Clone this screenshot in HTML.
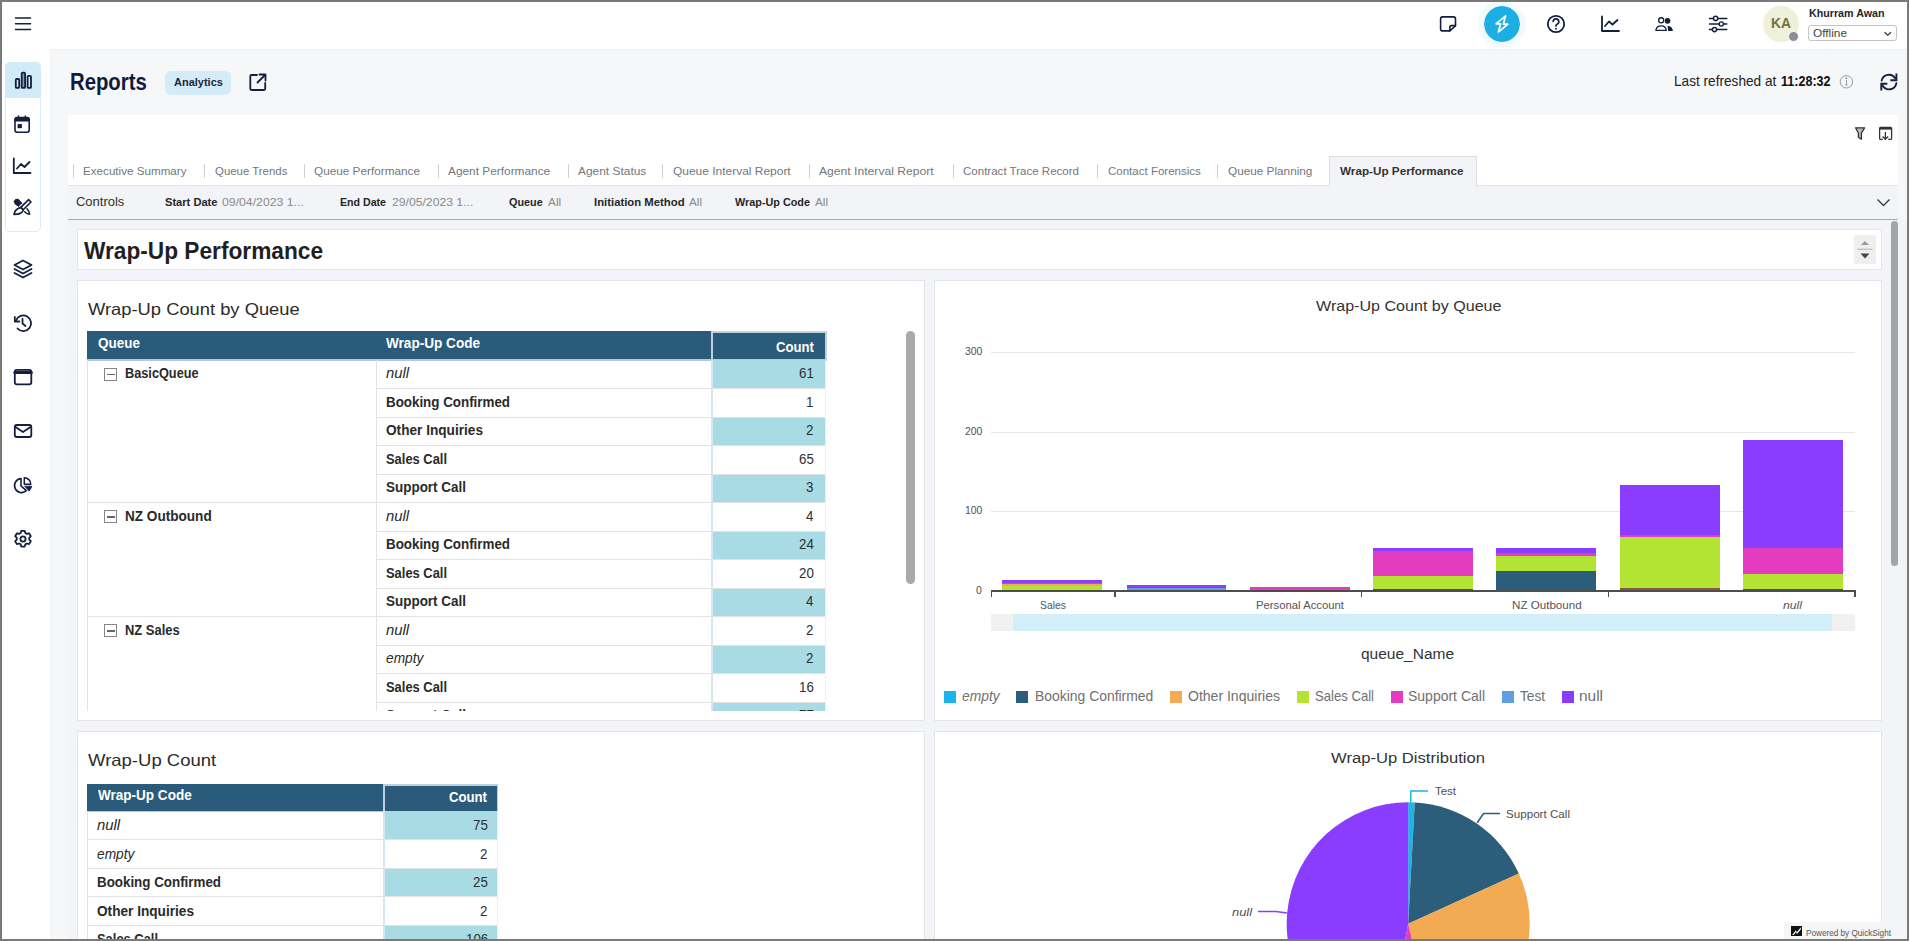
<!DOCTYPE html>
<html><head><meta charset="utf-8"><title>Reports - Wrap-Up Performance</title>
<style>
html,body{margin:0;padding:0;}
body{width:1909px;height:941px;position:relative;overflow:hidden;background:#f6f7f9;font-family:'Liberation Sans',sans-serif;}
.a{position:absolute;box-sizing:border-box;}
.t{position:absolute;white-space:nowrap;transform-origin:0 0;}
svg{position:absolute;overflow:visible;}
</style></head><body>
<!-- header -->
<div class=a style="left:0;top:0;width:1909px;height:49px;background:#fff;"></div>
<div class=a style="left:50px;top:49px;width:1857px;height:1px;background:#ecedf0;"></div>
<div class=a style="left:50px;top:49px;width:1px;height:892px;background:#f1f2f4;"></div>
<!-- sidebar -->
<div class=a style="left:0;top:49px;width:50px;height:892px;background:#fff;"></div>
<div class=a style="left:5px;top:62px;width:36px;height:170px;border:1px solid #d9ecf6;border-radius:5px;background:#fff;"></div>
<div class=a style="left:5px;top:62px;width:36px;height:36px;background:#d1ebf8;border-radius:5px 5px 0 0;"></div>

<svg width="1909" height="941" style="left:0;top:0;" fill="none" stroke="#141f3f" stroke-width="1.8" stroke-linecap="round" stroke-linejoin="round">
 <!-- hamburger -->
 <path d="M15.5 18H30.5M15.5 23.7H30.5M15.5 29.5H30.5" stroke-width="1.6"/>
 <!-- bars active -->
 <rect x="15.8" y="79" width="3.4" height="8.9" rx="1"/>
 <rect x="21.7" y="72.6" width="3.4" height="15.3" rx="1" fill="#8797ad"/>
 <rect x="27.6" y="75.8" width="3.4" height="12.1" rx="1"/>
 <!-- calendar -->
 <path d="M15 119.8A2.2 2.2 0 0 1 17.2 117.6H27A2.2 2.2 0 0 1 29.2 119.8V130.1A2.2 2.2 0 0 1 27 132.3H17.2A2.2 2.2 0 0 1 15 130.1Z" stroke-width="1.6"/>
 <path d="M14.3 121.6V119.6A2.4 2.4 0 0 1 16.7 117.2H27.5A2.4 2.4 0 0 1 29.9 119.6V121.6Z" fill="#141f3f" stroke="none"/>
 <path d="M18.5 115.6V118M25.4 115.6V118" stroke-width="1.5" stroke-linecap="butt"/>
 <rect x="17.6" y="124.1" width="4.3" height="4.1" fill="#141f3f" stroke="none"/>
 <!-- line chart -->
 <path d="M13.8 158.5V173H30.5"/>
 <path d="M17 168.5L21 164L24.5 167L29.5 162"/>
 <!-- brush -->
 <path d="M28.6 199.6L31 202L23.2 209.8L20.8 207.4Z" stroke-width="1.6"/>
 <path d="M20.8 207.4L23.2 209.8Q22.5 214.3 14 214.3Q15 209 20.8 207.4Z" stroke-width="1.7"/>
 <path d="M14.3 201.3Q15 198.5 18.2 199.2L22 203.4L19.6 204.6L18.8 206.4Q14 204.5 14.3 201.3Z" fill="#141f3f" stroke-width="1"/>
 <path d="M27 208.8Q29.8 212 29.6 214.2Q27 214.2 24.6 211.8" stroke-width="1.6"/>
 <!-- layers -->
 <path d="M23 260.5L31.5 265L23 269.5L14.5 265Z"/>
 <path d="M14.5 269L23 273.5L31.5 269M14.5 273L23 277.5L31.5 273"/>
 <!-- history -->
 <path d="M16 320.5A7.8 7.8 0 1 1 17.5 328.5"/>
 <path d="M14.8 317V321.5H19.3"/>
 <path d="M22.5 319V323.5L25.5 326"/>
 <!-- window -->
 <rect x="14.8" y="369.8" width="16.5" height="14.5" rx="2"/>
 <path d="M14.8 372.5H31.3" stroke-width="3"/>
 <!-- mail -->
 <rect x="14.8" y="425" width="16.5" height="12" rx="2"/>
 <path d="M15.5 427L23 432L30.5 427"/>
 <!-- pie -->
 <path d="M21 478.6A7 7 0 1 0 26.3 490.7L21 485.8Z" stroke-width="1.6"/>
 <path d="M24.3 477.7V484.2H30.8A6.6 6.6 0 0 0 24.3 477.7Z" stroke-width="1.5"/>
 <path d="M25 486.2H31.8Q31 489 29.2 490.9Z" fill="#141f3f" stroke-width="0.8"/>
 <!-- gear -->
 <circle cx="23" cy="539" r="2.6"/>
 <path d="M21.3 530.8h3.4l.6 2.2 1.6.9 2.2-.6 1.7 2.9-1.6 1.6v1.8l1.6 1.6-1.7 2.9-2.2-.6-1.6.9-.6 2.2h-3.4l-.6-2.2-1.6-.9-2.2.6-1.7-2.9 1.6-1.6v-1.8l-1.6-1.6 1.7-2.9 2.2.6 1.6-.9z"/>

 <!-- header icons -->
 <path d="M1442.6 16.9H1453.5A2 2 0 0 1 1455.5 18.9V25.8L1449.8 30.9H1442.6A2 2 0 0 1 1440.6 28.9V18.9A2 2 0 0 1 1442.6 16.9Z" stroke-width="1.6"/>
 <path d="M1455.4 25.6H1451.4A1.6 1.6 0 0 0 1449.8 27.2V30.9" stroke-width="1.6"/>
 <circle cx="1502" cy="24" r="18" fill="#1caee4" stroke="none"/>
 <circle cx="1502" cy="24" r="21" fill="none" stroke="#f3fafd" stroke-width="6"/>
 <path d="M1505.6 15.8L1496 23.8H1500.6L1498.4 32L1507.9 24.2H1503.3Z" stroke="#fff" stroke-width="1.7"/>
 <circle cx="1556" cy="24" r="8.2"/>
 <path d="M1553.2 21.5A2.8 2.8 0 1 1 1557 24.2Q1556 24.8 1556 26" stroke-width="1.7"/>
 <circle cx="1556" cy="28.8" r="1" fill="#141f3f" stroke="none"/>
 <path d="M1602 16.5V31H1619"/>
 <path d="M1605 26L1609 21.5L1612.5 24.5L1617.5 20"/>
 <circle cx="1667.5" cy="20.8" r="2.9" fill="#141f3f" stroke="none"/>
 <circle cx="1661.2" cy="20.3" r="3.7" fill="#fff" stroke="none"/>
 <circle cx="1661.2" cy="20.3" r="2.55" stroke-width="1.3"/>
 <path d="M1655.9 30.4Q1656.4 25.9 1661.1 25.9Q1665.8 25.9 1666.3 30.4Z" stroke-width="1.3"/>
 <path d="M1667.6 25.8Q1672.4 26.2 1672.9 30.9H1668.1Z" fill="#141f3f" stroke="none"/>
 <path d="M1709.5 18.4H1726.8M1709.5 24H1726.8M1709.5 29.6H1726.8" stroke-width="1.5"/>
 <circle cx="1715.6" cy="18.4" r="2.1" fill="#fff" stroke-width="1.4"/>
 <circle cx="1721.3" cy="24" r="2.1" fill="#fff" stroke-width="1.4"/>
 <circle cx="1714.5" cy="29.6" r="2.1" fill="#fff" stroke-width="1.4"/>
 <!-- external link -->
 <path d="M257 75H251.5A1.2 1.2 0 0 0 250.3 76.2V88.8A1.2 1.2 0 0 0 251.5 90H264A1.2 1.2 0 0 0 265.2 88.8V83"/>
 <path d="M257.5 82.5L265 75M259.5 74.5H265.5V80.5"/>
 <!-- refresh -->
 <path d="M1881.7 80.6A7.4 7.4 0 0 1 1895.2 78.2M1896.3 83.3A7.4 7.4 0 0 1 1882.7 85.8" stroke-width="1.9"/>
 <path d="M1896.4 73.6V80.3H1890.4M1881.3 90.4V83.8H1887.3" stroke-width="1.9" stroke-linecap="butt" stroke-linejoin="miter"/>
</svg>
<!-- avatar -->
<div class=a style="left:1763px;top:6px;width:36px;height:36px;border-radius:50%;background:#eef0da;"></div>
<div class=a style="left:1788px;top:31px;width:11px;height:11px;border-radius:50%;background:#8a8e96;border:1px solid #fff;"></div>
<div class=a style="left:1808px;top:25px;width:89px;height:16px;border:1px solid #c4c4c4;border-radius:3px;background:#fff;"></div>
<svg width="1909" height="941" style="left:0;top:0;" fill="none" stroke="#333" stroke-width="1.2">
 <path d="M1884.5 32.3L1887.8 35.3L1891 32.3"/>
</svg>
<!-- Analytics pill -->
<div class=a style="left:165px;top:71px;width:66px;height:24px;border-radius:6px;background:#d4ecf8;"></div>
<!-- info circle -->
<svg width="1909" height="941" style="left:0;top:0;" fill="none" stroke="#9a9a9a" stroke-width="1">
 <circle cx="1846.4" cy="81.8" r="6.2"/>
 <path d="M1846.4 80V85M1845.2 85H1847.6" />
 <circle cx="1846.4" cy="78.2" r="0.6" fill="#9a9a9a"/>
</svg>

<!-- dashboard container -->
<div class=a style="left:68px;top:115px;width:1830px;height:71px;background:#fff;border-bottom:1px solid #e4e5e9;"></div>
<div class=a style="left:68px;top:186px;width:1830px;height:34px;background:#f3f4f8;border-bottom:1px solid #a6aab1;"></div>
<div class=a style="left:68px;top:220px;width:1839px;height:721px;background:#f3f4f7;"></div>
<!-- active tab -->
<div class=a style="left:1329px;top:156px;width:148px;height:31px;background:#f3f4f8;border:1px solid #dcdde1;border-bottom:none;"></div>
<!-- tab separators -->
<div class=a style="left:73px;top:164px;width:1px;height:14px;background:#d0d0d0;"></div>
<div class=a style="left:204px;top:164px;width:1px;height:14px;background:#d0d0d0;"></div>
<div class=a style="left:304px;top:164px;width:1px;height:14px;background:#d0d0d0;"></div>
<div class=a style="left:438px;top:164px;width:1px;height:14px;background:#d0d0d0;"></div>
<div class=a style="left:568px;top:164px;width:1px;height:14px;background:#d0d0d0;"></div>
<div class=a style="left:662px;top:164px;width:1px;height:14px;background:#d0d0d0;"></div>
<div class=a style="left:809px;top:164px;width:1px;height:14px;background:#d0d0d0;"></div>
<div class=a style="left:953px;top:164px;width:1px;height:14px;background:#d0d0d0;"></div>
<div class=a style="left:1097px;top:164px;width:1px;height:14px;background:#d0d0d0;"></div>
<div class=a style="left:1217px;top:164px;width:1px;height:14px;background:#d0d0d0;"></div>
<svg width="1909" height="941" style="left:0;top:0;" fill="none" stroke="#333" stroke-width="1.3" stroke-linejoin="round">
 <!-- filter -->
 <path d="M1855.6 127.8H1864.6L1861.4 133.2V139.2L1858.4 137.2V133.2Z" fill="#bbb"/>
 <!-- download -->
 <path d="M1882.7 139.4H1880.6A1 1 0 0 1 1879.6 138.4V128.4A1 1 0 0 1 1880.6 127.4H1890.6A1 1 0 0 1 1891.6 128.4V138.4A1 1 0 0 1 1890.6 139.4H1888.3"/>
 <path d="M1879.8 128.6H1891.4" stroke-width="2"/>
 <path d="M1885.4 132V139.2M1882.6 136.5L1885.4 139.3L1888.2 136.5"/>
 <!-- chevron -->
 <path d="M1877.5 199.5L1883.5 205.5L1889.5 199.5" stroke-width="1.2"/>
</svg>

<!-- title panel -->
<div class=a style="left:77px;top:229px;width:1805px;height:41px;background:#fff;border:1px solid #e4e5e9;"></div>
<div class=a style="left:1854px;top:235px;width:22px;height:29px;background:#efefef;border-radius:2px;"></div>
<svg width="1909" height="941" style="left:0;top:0;" stroke="none">
 <path d="M1861 245H1869L1865 241Z" fill="#9a9a9a"/>
 <path d="M1857.5 249.2H1872.5" stroke="#b0b0b0" stroke-width="1"/>
 <path d="M1860.5 253.5H1869.5L1865 258.5Z" fill="#444"/>
</svg>
<!-- panels -->
<div class=a style="left:77px;top:280px;width:848px;height:441px;background:#fff;border:1px solid #e4e5e9;"></div>
<div class=a style="left:934px;top:280px;width:948px;height:441px;background:#fff;border:1px solid #e4e5e9;"></div>
<div class=a style="left:77px;top:731px;width:848px;height:220px;background:#fff;border:1px solid #e4e5e9;"></div>
<div class=a style="left:934px;top:731px;width:948px;height:220px;background:#fff;border:1px solid #e4e5e9;"></div>
<!-- dashboard scrollbar thumb -->
<div class=a style="left:1891px;top:221px;width:7px;height:345px;background:#a4a5a8;border-radius:4px;"></div>

<div class=a style="left:87px;top:331px;width:624px;height:28px;background:#2b5b7a;"></div>
<div class=a style="left:711px;top:331px;width:116px;height:29px;background:#bcd3de;"></div>
<div class=a style="left:713px;top:333px;width:112px;height:26px;background:#2b5b7a;"></div>
<div class=a style="left:87px;top:359px;width:740px;height:1.5px;background:#b3cad8;"></div>
<div class=a style="left:87px;top:360px;width:740px;height:351px;overflow:hidden;">
<div class=a style="left:0px;top:0px;width:1px;height:400px;background:#e2e2e2;"></div>
<div class=a style="left:289px;top:0px;width:1px;height:400px;background:#e2e2e2;"></div>
<div class=a style="left:624px;top:0px;width:2px;height:400px;background:#d5e6ee;"></div>
<div class=a style="left:738px;top:0px;width:1px;height:400px;background:#eef0f1;"></div>
<div class=a style="left:626px;top:0.0px;width:112px;height:28px;background:#a9dbe4;"></div>
<div class=a style="left:289px;top:28.0px;width:449px;height:1px;background:#e2e2e2;"></div>
<div class=a style="left:626px;top:57.0px;width:112px;height:28px;background:#a9dbe4;"></div>
<div class=a style="left:289px;top:56.5px;width:449px;height:1px;background:#e2e2e2;"></div>
<div class=a style="left:289px;top:85.0px;width:449px;height:1px;background:#e2e2e2;"></div>
<div class=a style="left:626px;top:114.0px;width:112px;height:28px;background:#a9dbe4;"></div>
<div class=a style="left:289px;top:113.5px;width:449px;height:1px;background:#e2e2e2;"></div>
<div class=a style="left:289px;top:142.0px;width:449px;height:1px;background:#e2e2e2;"></div>
<div class=a style="left:626px;top:171.0px;width:112px;height:28px;background:#a9dbe4;"></div>
<div class=a style="left:289px;top:170.5px;width:449px;height:1px;background:#e2e2e2;"></div>
<div class=a style="left:289px;top:199.0px;width:449px;height:1px;background:#e2e2e2;"></div>
<div class=a style="left:626px;top:228.0px;width:112px;height:28px;background:#a9dbe4;"></div>
<div class=a style="left:289px;top:227.5px;width:449px;height:1px;background:#e2e2e2;"></div>
<div class=a style="left:289px;top:256.0px;width:449px;height:1px;background:#e2e2e2;"></div>
<div class=a style="left:626px;top:285.0px;width:112px;height:28px;background:#a9dbe4;"></div>
<div class=a style="left:289px;top:284.5px;width:449px;height:1px;background:#e2e2e2;"></div>
<div class=a style="left:289px;top:313.0px;width:449px;height:1px;background:#e2e2e2;"></div>
<div class=a style="left:626px;top:342.0px;width:112px;height:28px;background:#a9dbe4;"></div>
<div class=a style="left:289px;top:341.5px;width:449px;height:1px;background:#e2e2e2;"></div>
<div class=a style="left:289px;top:370.0px;width:449px;height:1px;background:#e2e2e2;"></div>
<div class=a style="left:0px;top:142.0px;width:289px;height:1px;background:#e2e2e2;"></div>
<div class=a style="left:0px;top:256.0px;width:289px;height:1px;background:#e2e2e2;"></div>
</div>
<div class=a style="left:104px;top:367.5px;width:13px;height:13px;border:1px solid #858585;background:#fff;"></div>
<div class=a style="left:106.5px;top:373.5px;width:8px;height:1.6px;background:#666;"></div>
<div class=a style="left:104px;top:510.0px;width:13px;height:13px;border:1px solid #858585;background:#fff;"></div>
<div class=a style="left:106.5px;top:516.0px;width:8px;height:1.6px;background:#666;"></div>
<div class=a style="left:104px;top:624.0px;width:13px;height:13px;border:1px solid #858585;background:#fff;"></div>
<div class=a style="left:106.5px;top:630.0px;width:8px;height:1.6px;background:#666;"></div>
<div class=a style="left:906px;top:331px;width:9px;height:253px;background:#aaaaaa;border-radius:5px;"></div>
<div class=a style="left:87px;top:783.5px;width:296px;height:27px;background:#2b5b7a;"></div>
<div class=a style="left:383px;top:783.5px;width:115px;height:28px;background:#bcd3de;"></div>
<div class=a style="left:385px;top:785.5px;width:112px;height:25px;background:#2b5b7a;"></div>
<div class=a style="left:87px;top:810.5px;width:411px;height:1.5px;background:#b3cad8;"></div>
<div class=a style="left:87px;top:811px;width:412px;height:128px;overflow:hidden;">
<div class=a style="left:0px;top:0px;width:1px;height:200px;background:#e2e2e2;"></div>
<div class=a style="left:296px;top:0px;width:2px;height:200px;background:#d5e6ee;"></div>
<div class=a style="left:410px;top:0px;width:1px;height:200px;background:#eef0f1;"></div>
<div class=a style="left:298px;top:0.0px;width:112px;height:28px;background:#a9dbe4;"></div>
<div class=a style="left:0px;top:28.0px;width:410px;height:1px;background:#e2e2e2;"></div>
<div class=a style="left:298px;top:57.0px;width:112px;height:28px;background:#a9dbe4;"></div>
<div class=a style="left:0px;top:56.5px;width:410px;height:1px;background:#e2e2e2;"></div>
<div class=a style="left:0px;top:85.0px;width:410px;height:1px;background:#e2e2e2;"></div>
<div class=a style="left:298px;top:114.0px;width:112px;height:28px;background:#a9dbe4;"></div>
<div class=a style="left:0px;top:113.5px;width:410px;height:1px;background:#e2e2e2;"></div>
<div class=a style="left:0px;top:142.0px;width:410px;height:1px;background:#e2e2e2;"></div>
</div>
<div class=a style="left:991px;top:352.2px;width:864px;height:1px;background:#e6e6e6;"></div>
<div class=a style="left:991px;top:431.7px;width:864px;height:1px;background:#e6e6e6;"></div>
<div class=a style="left:991px;top:511.1px;width:864px;height:1px;background:#e6e6e6;"></div>
<div class=a style="left:1002.2px;top:590px;width:99.5px;height:1px;background:#2c5d7b;"></div>
<div class=a style="left:1002.2px;top:585.5px;width:99.5px;height:4.5px;background:#b3e434;"></div>
<div class=a style="left:1002.2px;top:584px;width:99.5px;height:1.5px;background:#f2aa53;"></div>
<div class=a style="left:1002.2px;top:583px;width:99.5px;height:1px;background:#e33cc0;"></div>
<div class=a style="left:1002.2px;top:580.1px;width:99.5px;height:2.9px;background:#8a3dff;"></div>
<div class=a style="left:1126.5px;top:588px;width:99.5px;height:3px;background:#5f9ee3;"></div>
<div class=a style="left:1126.5px;top:584.8px;width:99.5px;height:3.2px;background:#8a3dff;"></div>
<div class=a style="left:1250.0px;top:587.4px;width:99.5px;height:3.6px;background:#e33cc0;"></div>
<div class=a style="left:1373.0px;top:589px;width:99.5px;height:2px;background:#2c5d7b;"></div>
<div class=a style="left:1373.0px;top:575.6px;width:99.5px;height:13.4px;background:#b3e434;"></div>
<div class=a style="left:1373.0px;top:550.7px;width:99.5px;height:24.9px;background:#e33cc0;"></div>
<div class=a style="left:1373.0px;top:547.5px;width:99.5px;height:3.2px;background:#8a3dff;"></div>
<div class=a style="left:1496.0px;top:571.4px;width:99.5px;height:19.6px;background:#2c5d7b;"></div>
<div class=a style="left:1496.0px;top:555.5px;width:99.5px;height:15.9px;background:#b3e434;"></div>
<div class=a style="left:1496.0px;top:552.5px;width:99.5px;height:3.0px;background:#e33cc0;"></div>
<div class=a style="left:1496.0px;top:548px;width:99.5px;height:4.5px;background:#8a3dff;"></div>
<div class=a style="left:1620.0px;top:588.3px;width:99.5px;height:2.7px;background:#8a5a3c;"></div>
<div class=a style="left:1620.0px;top:537.3px;width:99.5px;height:51.0px;background:#b3e434;"></div>
<div class=a style="left:1620.0px;top:534.8px;width:99.5px;height:2.5px;background:#e33cc0;"></div>
<div class=a style="left:1620.0px;top:485.3px;width:99.5px;height:49.5px;background:#8a3dff;"></div>
<div class=a style="left:1743.0px;top:589px;width:99.5px;height:2px;background:#2c5d7b;"></div>
<div class=a style="left:1743.0px;top:573.7px;width:99.5px;height:15.3px;background:#b3e434;"></div>
<div class=a style="left:1743.0px;top:548.1px;width:99.5px;height:25.6px;background:#e33cc0;"></div>
<div class=a style="left:1743.0px;top:439.8px;width:99.5px;height:108.3px;background:#8a3dff;"></div>
<div class=a style="left:990.5px;top:590px;width:865px;height:1.6px;background:#4d4d4d;"></div>
<div class=a style="left:990.5px;top:590px;width:1.6px;height:7px;background:#4d4d4d;"></div>
<div class=a style="left:1114px;top:590px;width:1.6px;height:7px;background:#4d4d4d;"></div>
<div class=a style="left:1360.5px;top:590px;width:1.6px;height:7px;background:#4d4d4d;"></div>
<div class=a style="left:1607.5px;top:590px;width:1.6px;height:7px;background:#4d4d4d;"></div>
<div class=a style="left:1854px;top:590px;width:1.6px;height:7px;background:#4d4d4d;"></div>
<div class=a style="left:991px;top:613.5px;width:864px;height:17px;background:#d2eef8;"></div>
<div class=a style="left:991px;top:613.5px;width:22px;height:17px;background:#f1f1f1;"></div>
<div class=a style="left:1832px;top:613.5px;width:23px;height:17px;background:#f1f1f1;"></div>
<div class=a style="left:944px;top:691px;width:12px;height:12px;background:#1db4e8;"></div>
<div class=a style="left:1016px;top:691px;width:12px;height:12px;background:#2c5d7b;"></div>
<div class=a style="left:1170px;top:691px;width:12px;height:12px;background:#f2aa53;"></div>
<div class=a style="left:1297px;top:691px;width:12px;height:12px;background:#b3e434;"></div>
<div class=a style="left:1391px;top:691px;width:12px;height:12px;background:#e33cc0;"></div>
<div class=a style="left:1502px;top:691px;width:12px;height:12px;background:#5f9ee3;"></div>
<div class=a style="left:1562px;top:691px;width:12px;height:12px;background:#8a3dff;"></div>

<!-- pie -->
<svg width="1909" height="941" style="left:0;top:0;" stroke="none">
 <path d="M1408.2 923.8L1408.20 802.30A121.5 121.5 0 0 1 1414.77 802.48Z" fill="#1db4e8"/>
<path d="M1408.2 923.8L1414.77 802.48A121.5 121.5 0 0 1 1518.85 873.61Z" fill="#2c5d7b"/>
<path d="M1408.2 923.8L1518.85 873.61A121.5 121.5 0 0 1 1435.53 1042.19Z" fill="#f2aa53"/>
<path d="M1408.2 923.8L1435.53 1042.19A121.5 121.5 0 0 1 1385.02 1043.07Z" fill="#e33cc0"/>
<path d="M1408.2 923.8L1385.02 1043.07A121.5 121.5 0 0 1 1408.20 802.30Z" fill="#8a3dff"/>
 <path d="M1410.8 802.5V791H1428" fill="none" stroke="#1db4e8" stroke-width="1.5"/>
 <path d="M1477.2 822.7L1483.5 813.6H1500" fill="none" stroke="#2c5d7b" stroke-width="1.5"/>
 <path d="M1258 911.5H1276L1287 913" fill="none" stroke="#8a3dff" stroke-width="1.5"/>
</svg>
<!-- quicksight logo -->
<div class=a style="left:1784px;top:922px;width:123px;height:19px;background:#f4f5f7;"></div>
<div class=a style="left:1791px;top:926px;width:11px;height:10px;background:#111;"></div>
<svg width="1909" height="941" style="left:0;top:0;" stroke="none">
 <path d="M1792.2 935L1795.8 930.2L1796.8 932.2L1800.8 927.3V929.5L1797 934L1796 932L1793.8 935Z" fill="#fff"/>
</svg>

<div class=t style="left:1808.5px;top:8px;font-size:11px;line-height:11px;font-weight:bold;font-style:normal;color:#262626;transform:scaleX(0.9724);">Khurram Awan</div>
<div class=t style="left:1812.9px;top:28px;font-size:11px;line-height:11px;font-weight:normal;font-style:normal;color:#444;transform:scaleX(1.0762);">Offline</div>
<div class=t style="left:1770.8px;top:16px;font-size:14.5px;line-height:14.5px;font-weight:bold;font-style:normal;color:#75733a;transform:scaleX(0.9545);">KA</div>
<div class=t style="left:69.7px;top:71px;font-size:23px;line-height:23px;font-weight:bold;font-style:normal;color:#0f1b3e;transform:scaleX(0.8826);">Reports</div>
<div class=t style="left:174.0px;top:77px;font-size:11px;line-height:11px;font-weight:bold;font-style:normal;color:#1d2540;">Analytics</div>
<div class=t style="left:1673.7px;top:74px;font-size:14.5px;line-height:14.5px;font-weight:normal;font-style:normal;color:#222;transform:scaleX(0.9400);">Last refreshed at</div>
<div class=t style="left:1780.6px;top:74px;font-size:14.5px;line-height:14.5px;font-weight:bold;font-style:normal;color:#111;transform:scaleX(0.8664);">11:28:32</div>
<div class=t style="left:83.2px;top:166px;font-size:11px;line-height:11px;font-weight:normal;font-style:normal;color:#74777d;transform:scaleX(1.0581);">Executive Summary</div>
<div class=t style="left:214.9px;top:166px;font-size:11px;line-height:11px;font-weight:normal;font-style:normal;color:#74777d;transform:scaleX(1.0385);">Queue Trends</div>
<div class=t style="left:314.0px;top:166px;font-size:11px;line-height:11px;font-weight:normal;font-style:normal;color:#74777d;transform:scaleX(1.0700);">Queue Performance</div>
<div class=t style="left:447.8px;top:166px;font-size:11px;line-height:11px;font-weight:normal;font-style:normal;color:#74777d;transform:scaleX(1.0783);">Agent Performance</div>
<div class=t style="left:578.0px;top:166px;font-size:11px;line-height:11px;font-weight:normal;font-style:normal;color:#74777d;transform:scaleX(1.0841);">Agent Status</div>
<div class=t style="left:672.6px;top:166px;font-size:11px;line-height:11px;font-weight:normal;font-style:normal;color:#74777d;transform:scaleX(1.0875);">Queue Interval Report</div>
<div class=t style="left:819.3px;top:166px;font-size:11px;line-height:11px;font-weight:normal;font-style:normal;color:#74777d;transform:scaleX(1.1034);">Agent Interval Report</div>
<div class=t style="left:963.0px;top:166px;font-size:11px;line-height:11px;font-weight:normal;font-style:normal;color:#74777d;transform:scaleX(1.0483);">Contract Trace Record</div>
<div class=t style="left:1107.5px;top:166px;font-size:11px;line-height:11px;font-weight:normal;font-style:normal;color:#74777d;transform:scaleX(1.0467);">Contact Forensics</div>
<div class=t style="left:1227.6px;top:166px;font-size:11px;line-height:11px;font-weight:normal;font-style:normal;color:#74777d;transform:scaleX(1.0696);">Queue Planning</div>
<div class=t style="left:1339.5px;top:166px;font-size:11px;line-height:11px;font-weight:bold;font-style:normal;color:#333;transform:scaleX(1.0652);">Wrap-Up Performance</div>
<div class=t style="left:75.9px;top:196px;font-size:12.5px;line-height:12.5px;font-weight:normal;font-style:normal;color:#2f2f2f;transform:scaleX(1.0377);">Controls</div>
<div class=t style="left:164.5px;top:197px;font-size:11px;line-height:11px;font-weight:bold;font-style:normal;color:#262626;transform:scaleX(1.0102);">Start Date</div>
<div class=t style="left:221.7px;top:197px;font-size:11px;line-height:11px;font-weight:normal;font-style:normal;color:#8a8a8a;transform:scaleX(1.1143);">09/04/2023 1...</div>
<div class=t style="left:340.0px;top:197px;font-size:11px;line-height:11px;font-weight:bold;font-style:normal;color:#262626;transform:scaleX(0.9646);">End Date</div>
<div class=t style="left:391.7px;top:197px;font-size:11px;line-height:11px;font-weight:normal;font-style:normal;color:#8a8a8a;transform:scaleX(1.1075);">29/05/2023 1...</div>
<div class=t style="left:509.0px;top:197px;font-size:11px;line-height:11px;font-weight:bold;font-style:normal;color:#262626;transform:scaleX(0.9844);">Queue</div>
<div class=t style="left:547.8px;top:197px;font-size:11px;line-height:11px;font-weight:normal;font-style:normal;color:#8a8a8a;transform:scaleX(1.0789);">All</div>
<div class=t style="left:593.7px;top:197px;font-size:11px;line-height:11px;font-weight:bold;font-style:normal;color:#262626;transform:scaleX(1.0297);">Initiation Method</div>
<div class=t style="left:689.0px;top:197px;font-size:11px;line-height:11px;font-weight:normal;font-style:normal;color:#8a8a8a;transform:scaleX(1.0626);">All</div>
<div class=t style="left:735.0px;top:197px;font-size:11px;line-height:11px;font-weight:bold;font-style:normal;color:#262626;transform:scaleX(0.9844);">Wrap-Up Code</div>
<div class=t style="left:815.0px;top:197px;font-size:11px;line-height:11px;font-weight:normal;font-style:normal;color:#8a8a8a;transform:scaleX(1.0626);">All</div>
<div class=t style="left:84.0px;top:240px;font-size:23px;line-height:23px;font-weight:bold;font-style:normal;color:#1f1f1f;transform:scaleX(0.9859);">Wrap-Up Performance</div>
<div class=t style="left:88.0px;top:301px;font-size:16.5px;line-height:16.5px;font-weight:normal;font-style:normal;color:#2b2b2b;transform:scaleX(1.1115);">Wrap-Up Count by Queue</div>
<div class=t style="left:98.1px;top:336px;font-size:14.5px;line-height:14.5px;font-weight:bold;font-style:normal;color:#fff;transform:scaleX(0.9285);">Queue</div>
<div class=t style="left:386.0px;top:336px;font-size:14.5px;line-height:14.5px;font-weight:bold;font-style:normal;color:#fff;transform:scaleX(0.9369);">Wrap-Up Code</div>
<div class=t style="left:776.0px;top:340px;font-size:14.5px;line-height:14.5px;font-weight:bold;font-style:normal;color:#fff;transform:scaleX(0.9051);">Count</div>
<div class=t style="left:125.0px;top:366px;font-size:14.5px;line-height:14.5px;font-weight:bold;font-style:normal;color:#2a2a2a;transform:scaleX(0.8780);">BasicQueue</div>
<div class=t style="left:385.5px;top:366px;font-size:14.5px;line-height:14.5px;font-weight:normal;font-style:italic;color:#2a2a2a;transform:scaleX(1.0231);">null</div>
<div class=t style="left:798.8px;top:366px;font-size:14.5px;line-height:14.5px;font-weight:normal;font-style:normal;color:#2f2f2f;transform:scaleX(0.9200);">61</div>
<div class=t style="left:385.5px;top:395px;font-size:14.5px;line-height:14.5px;font-weight:bold;font-style:normal;color:#2a2a2a;transform:scaleX(0.9217);">Booking Confirmed</div>
<div class=t style="left:806.2px;top:395px;font-size:14.5px;line-height:14.5px;font-weight:normal;font-style:normal;color:#2f2f2f;transform:scaleX(0.9200);">1</div>
<div class=t style="left:385.5px;top:423px;font-size:14.5px;line-height:14.5px;font-weight:bold;font-style:normal;color:#2a2a2a;transform:scaleX(0.9405);">Other Inquiries</div>
<div class=t style="left:806.2px;top:423px;font-size:14.5px;line-height:14.5px;font-weight:normal;font-style:normal;color:#2f2f2f;transform:scaleX(0.9200);">2</div>
<div class=t style="left:385.5px;top:452px;font-size:14.5px;line-height:14.5px;font-weight:bold;font-style:normal;color:#2a2a2a;transform:scaleX(0.8903);">Sales Call</div>
<div class=t style="left:798.8px;top:452px;font-size:14.5px;line-height:14.5px;font-weight:normal;font-style:normal;color:#2f2f2f;transform:scaleX(0.9200);">65</div>
<div class=t style="left:385.5px;top:480px;font-size:14.5px;line-height:14.5px;font-weight:bold;font-style:normal;color:#2a2a2a;transform:scaleX(0.9280);">Support Call</div>
<div class=t style="left:806.2px;top:480px;font-size:14.5px;line-height:14.5px;font-weight:normal;font-style:normal;color:#2f2f2f;transform:scaleX(0.9200);">3</div>
<div class=t style="left:125.0px;top:509px;font-size:14.5px;line-height:14.5px;font-weight:bold;font-style:normal;color:#2a2a2a;transform:scaleX(0.9362);">NZ Outbound</div>
<div class=t style="left:385.5px;top:509px;font-size:14.5px;line-height:14.5px;font-weight:normal;font-style:italic;color:#2a2a2a;transform:scaleX(1.0231);">null</div>
<div class=t style="left:806.2px;top:509px;font-size:14.5px;line-height:14.5px;font-weight:normal;font-style:normal;color:#2f2f2f;transform:scaleX(0.9200);">4</div>
<div class=t style="left:385.5px;top:537px;font-size:14.5px;line-height:14.5px;font-weight:bold;font-style:normal;color:#2a2a2a;transform:scaleX(0.9217);">Booking Confirmed</div>
<div class=t style="left:798.8px;top:537px;font-size:14.5px;line-height:14.5px;font-weight:normal;font-style:normal;color:#2f2f2f;transform:scaleX(0.9200);">24</div>
<div class=t style="left:385.5px;top:566px;font-size:14.5px;line-height:14.5px;font-weight:bold;font-style:normal;color:#2a2a2a;transform:scaleX(0.8903);">Sales Call</div>
<div class=t style="left:798.8px;top:566px;font-size:14.5px;line-height:14.5px;font-weight:normal;font-style:normal;color:#2f2f2f;transform:scaleX(0.9200);">20</div>
<div class=t style="left:385.5px;top:594px;font-size:14.5px;line-height:14.5px;font-weight:bold;font-style:normal;color:#2a2a2a;transform:scaleX(0.9280);">Support Call</div>
<div class=t style="left:806.2px;top:594px;font-size:14.5px;line-height:14.5px;font-weight:normal;font-style:normal;color:#2f2f2f;transform:scaleX(0.9200);">4</div>
<div class=t style="left:125.0px;top:623px;font-size:14.5px;line-height:14.5px;font-weight:bold;font-style:normal;color:#2a2a2a;transform:scaleX(0.8914);">NZ Sales</div>
<div class=t style="left:385.5px;top:623px;font-size:14.5px;line-height:14.5px;font-weight:normal;font-style:italic;color:#2a2a2a;transform:scaleX(1.0231);">null</div>
<div class=t style="left:806.2px;top:623px;font-size:14.5px;line-height:14.5px;font-weight:normal;font-style:normal;color:#2f2f2f;transform:scaleX(0.9200);">2</div>
<div class=t style="left:385.5px;top:651px;font-size:14.5px;line-height:14.5px;font-weight:normal;font-style:italic;color:#2a2a2a;transform:scaleX(0.9468);">empty</div>
<div class=t style="left:806.2px;top:651px;font-size:14.5px;line-height:14.5px;font-weight:normal;font-style:normal;color:#2f2f2f;transform:scaleX(0.9200);">2</div>
<div class=t style="left:385.5px;top:680px;font-size:14.5px;line-height:14.5px;font-weight:bold;font-style:normal;color:#2a2a2a;transform:scaleX(0.8903);">Sales Call</div>
<div class=t style="left:798.8px;top:680px;font-size:14.5px;line-height:14.5px;font-weight:normal;font-style:normal;color:#2f2f2f;transform:scaleX(0.9200);">16</div>
<div class=a style="left:0;top:0;width:1909px;height:711px;overflow:hidden;"><div class=t style="left:385.5px;top:708px;font-size:14.5px;line-height:14.5px;font-weight:bold;font-style:normal;color:#2a2a2a;transform:scaleX(0.9280);">Support Call</div></div>
<div class=a style="left:0;top:0;width:1909px;height:711px;overflow:hidden;"><div class=t style="left:798.8px;top:708px;font-size:14.5px;line-height:14.5px;font-weight:normal;font-style:normal;color:#2f2f2f;transform:scaleX(0.9200);">77</div></div>
<div class=t style="left:1315.5px;top:298px;font-size:15.5px;line-height:15.5px;font-weight:normal;font-style:normal;color:#333;transform:scaleX(1.0368);">Wrap-Up Count by Queue</div>
<div class=t style="left:964.6px;top:346px;font-size:11px;line-height:11px;font-weight:normal;font-style:normal;color:#505050;transform:scaleX(0.9500);">300</div>
<div class=t style="left:964.6px;top:426px;font-size:11px;line-height:11px;font-weight:normal;font-style:normal;color:#505050;transform:scaleX(0.9500);">200</div>
<div class=t style="left:964.6px;top:505px;font-size:11px;line-height:11px;font-weight:normal;font-style:normal;color:#505050;transform:scaleX(0.9500);">100</div>
<div class=t style="left:976.2px;top:585px;font-size:11px;line-height:11px;font-weight:normal;font-style:normal;color:#505050;transform:scaleX(0.9500);">0</div>
<div class=t style="left:1039.5px;top:600px;font-size:11px;line-height:11px;font-weight:normal;font-style:normal;color:#555;transform:scaleX(0.9407);">Sales</div>
<div class=t style="left:1255.5px;top:600px;font-size:11px;line-height:11px;font-weight:normal;font-style:normal;color:#555;transform:scaleX(1.0277);">Personal Account</div>
<div class=t style="left:1511.7px;top:600px;font-size:11px;line-height:11px;font-weight:normal;font-style:normal;color:#555;transform:scaleX(1.0553);">NZ Outbound</div>
<div class=t style="left:1783.0px;top:600px;font-size:11px;line-height:11px;font-weight:normal;font-style:italic;color:#555;transform:scaleX(1.1095);">null</div>
<div class=t style="left:1361.0px;top:646px;font-size:15.5px;line-height:15.5px;font-weight:normal;font-style:normal;color:#333;">queue_Name</div>
<div class=t style="left:961.7px;top:689px;font-size:14.5px;line-height:14.5px;font-weight:normal;font-style:italic;color:#707070;transform:scaleX(0.9544);">empty</div>
<div class=t style="left:1034.8px;top:689px;font-size:14.5px;line-height:14.5px;font-weight:normal;font-style:normal;color:#707070;transform:scaleX(0.9592);">Booking Confirmed</div>
<div class=t style="left:1188.0px;top:689px;font-size:14.5px;line-height:14.5px;font-weight:normal;font-style:normal;color:#707070;transform:scaleX(0.9673);">Other Inquiries</div>
<div class=t style="left:1314.5px;top:689px;font-size:14.5px;line-height:14.5px;font-weight:normal;font-style:normal;color:#707070;transform:scaleX(0.9038);">Sales Call</div>
<div class=t style="left:1407.5px;top:689px;font-size:14.5px;line-height:14.5px;font-weight:normal;font-style:normal;color:#707070;transform:scaleX(0.9650);">Support Call</div>
<div class=t style="left:1519.5px;top:689px;font-size:14.5px;line-height:14.5px;font-weight:normal;font-style:normal;color:#707070;transform:scaleX(0.9401);">Test</div>
<div class=t style="left:1578.5px;top:689px;font-size:14.5px;line-height:14.5px;font-weight:normal;font-style:normal;color:#707070;transform:scaleX(1.0630);">null</div>
<div class=t style="left:88.4px;top:752px;font-size:16.5px;line-height:16.5px;font-weight:normal;font-style:normal;color:#2b2b2b;transform:scaleX(1.1213);">Wrap-Up Count</div>
<div class=t style="left:98.0px;top:788px;font-size:14.5px;line-height:14.5px;font-weight:bold;font-style:normal;color:#fff;transform:scaleX(0.9329);">Wrap-Up Code</div>
<div class=t style="left:448.8px;top:790px;font-size:14.5px;line-height:14.5px;font-weight:bold;font-style:normal;color:#fff;transform:scaleX(0.9051);">Count</div>
<div class=t style="left:97.0px;top:818px;font-size:14.5px;line-height:14.5px;font-weight:normal;font-style:italic;color:#2a2a2a;transform:scaleX(1.0231);">null</div>
<div class=t style="left:473.0px;top:818px;font-size:14.5px;line-height:14.5px;font-weight:normal;font-style:normal;color:#2f2f2f;transform:scaleX(0.9200);">75</div>
<div class=t style="left:97.0px;top:847px;font-size:14.5px;line-height:14.5px;font-weight:normal;font-style:italic;color:#2a2a2a;transform:scaleX(0.9468);">empty</div>
<div class=t style="left:480.4px;top:847px;font-size:14.5px;line-height:14.5px;font-weight:normal;font-style:normal;color:#2f2f2f;transform:scaleX(0.9200);">2</div>
<div class=t style="left:97.0px;top:875px;font-size:14.5px;line-height:14.5px;font-weight:bold;font-style:normal;color:#2a2a2a;transform:scaleX(0.9217);">Booking Confirmed</div>
<div class=t style="left:473.0px;top:875px;font-size:14.5px;line-height:14.5px;font-weight:normal;font-style:normal;color:#2f2f2f;transform:scaleX(0.9200);">25</div>
<div class=t style="left:97.0px;top:904px;font-size:14.5px;line-height:14.5px;font-weight:bold;font-style:normal;color:#2a2a2a;transform:scaleX(0.9405);">Other Inquiries</div>
<div class=t style="left:480.4px;top:904px;font-size:14.5px;line-height:14.5px;font-weight:normal;font-style:normal;color:#2f2f2f;transform:scaleX(0.9200);">2</div>
<div class=t style="left:97.0px;top:932px;font-size:14.5px;line-height:14.5px;font-weight:bold;font-style:normal;color:#2a2a2a;transform:scaleX(0.8903);">Sales Call</div>
<div class=t style="left:465.5px;top:932px;font-size:14.5px;line-height:14.5px;font-weight:normal;font-style:normal;color:#2f2f2f;transform:scaleX(0.9200);">106</div>
<div class=t style="left:1331.0px;top:750px;font-size:15.5px;line-height:15.5px;font-weight:normal;font-style:normal;color:#333;transform:scaleX(1.0726);">Wrap-Up Distribution</div>
<div class=t style="left:1434.5px;top:786px;font-size:11px;line-height:11px;font-weight:normal;font-style:normal;color:#505050;transform:scaleX(1.0402);">Test</div>
<div class=t style="left:1506.2px;top:809px;font-size:11px;line-height:11px;font-weight:normal;font-style:normal;color:#505050;transform:scaleX(1.0570);">Support Call</div>
<div class=t style="left:1232.0px;top:907px;font-size:11px;line-height:11px;font-weight:normal;font-style:italic;color:#505050;transform:scaleX(1.1679);">null</div>
<div class=t style="left:1806.0px;top:929px;font-size:8.5px;line-height:8.5px;font-weight:normal;font-style:normal;color:#555;transform:scaleX(0.9620);">Powered by QuickSight</div>
<div class=a style="left:78px;top:711px;width:846px;height:9px;background:#fff;"></div>
<div class=a style="left:0;top:0;width:1909px;height:941px;border:2px solid #7a7a7a;"></div>

</body></html>
